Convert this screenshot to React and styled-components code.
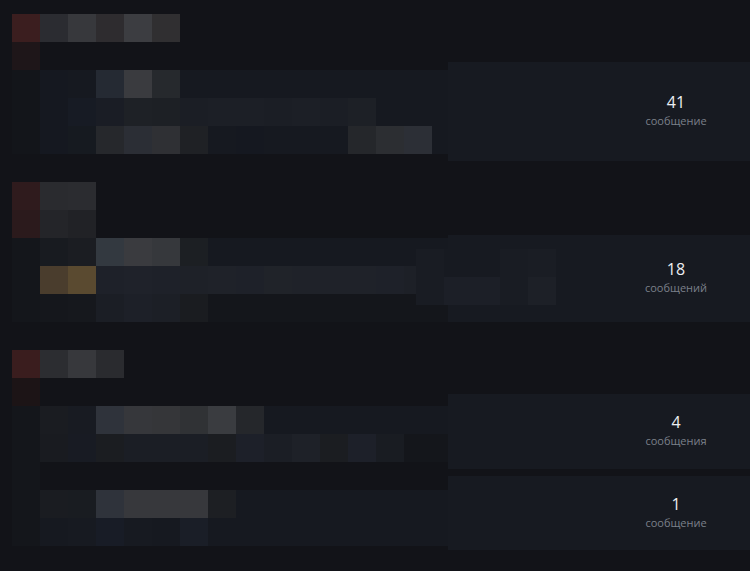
import React from "react";
import styled, { createGlobalStyle } from "styled-components";

const BG = "#121318";
const ROW = "#161920";

// blurred (mosaic) preview of each category: rows of 28px tiles, the rest of a row takes its fill
const sections = [
  {
    rows: [
      { fill: BG, cells: ["#3b1e1f", "#2b2c31", "#37383c", "#2e2c2f", "#3c3d41", "#302f31"] },
      { fill: BG, cells: ["#1e1619"] },
      { fill: ROW, cells: ["#13151a", "#151820", "#161920", "#252a33", "#3a3b3f", "#26292d"] },
      {
        fill: ROW,
        cells: ["#13151a", "#151820", "#171b24", "#1a1d25", "#1e2126", "#1d2025", "#1b1e25",
          "#1c1f26", "#1c1f26", "#1b1e25", "#1c1f26", "#1b1e25", "#1d2026"],
      },
      {
        fill: ROW,
        cells: ["#13151a", "#151820", "#161a20", "#26282c", "#2b2e35", "#2f3034", "#1f2125",
          "#161920", "#151820", "#161920", "#161920", "#161920", "#25272b", "#2c2e32", "#2c2f36"],
      },
    ],
    stats: [{ offset: 48, height: 99, count: "41", label: "сообщение" }],
  },
  {
    rows: [
      { fill: BG, cells: ["#2f1b1d", "#2a2b2f", "#2b2c30"] },
      { fill: BG, cells: ["#2b1a1c", "#242529", "#212226"] },
      { fill: ROW, cells: ["#14161b", "#181b20", "#1b1d22", "#333940", "#3a3b3f", "#36383c", "#1c1f23"] },
      {
        fill: "#1a1d24",
        cells: ["#14161b", "#4a3d2d", "#5a4a30", "#1e2129", "#1f222a", "#1e2129", "#1e2128",
          "#1f2229", "#1e2129", "#202329", "#1f2229", "#1f2229", "#1f2229", "#1e2129", "#1d2027"],
      },
      { fill: "#14161b", cells: ["#14161b", "#15171c", "#16181d", "#1b1e25", "#1d2028", "#1c1f26", "#1a1c20"] },
    ],
    preview: [
      ["#191c23", "#171a21", "#171a21", "#191c23", "#1a1d24"],
      ["#191c23", "#1c1f27", "#1c1f27", "#191c23", "#1d2027"],
    ],
    stats: [{ offset: 53, height: 87, count: "18", label: "сообщений" }],
  },
  {
    rows: [
      { fill: BG, cells: ["#3a1d1e", "#2c2d31", "#37383c", "#2a2b2f"] },
      { fill: BG, cells: ["#1c1416"] },
      {
        fill: ROW,
        cells: ["#14161b", "#1a1c21", "#181b22", "#2f333b", "#36373b", "#353639", "#303235", "#3a3c40", "#25272b"],
      },
      {
        fill: "#14161b",
        cells: ["#14161b", "#191b20", "#181b23", "#1b1d21", "#1b1e25", "#1b1e25", "#1b1e25", "#1b1d21",
          "#1d2029", "#1b1e25", "#1e2128", "#1b1d21", "#1d2029", "#191c22"],
      },
      { fill: BG, cells: ["#14161b"] },
      { fill: ROW, cells: ["#14161b", "#1a1c21", "#191c21", "#2f333b", "#37383c", "#37383c", "#37383c", "#1d1f23"] },
      { fill: ROW, cells: ["#14161b", "#161920", "#171a21", "#181c26", "#171a21", "#161920", "#1a1e27"] },
    ],
    stats: [
      { offset: 44, height: 75, count: "4", label: "сообщения" },
      { offset: 0, height: 74, count: "1", label: "сообщение" },
    ],
  },
];

const GlobalStyle = createGlobalStyle`
  html, body {
    margin: 0;
    background: ${BG};
    font-family: "Open Sans", "Liberation Sans", sans-serif;
  }
`;

const Page = styled.div`
  width: 750px;
  height: 571px;
  overflow: hidden;
  box-sizing: border-box;
  padding: 14px 0 0 12px;
  background: ${BG};
`;

const Section = styled.section`
  position: relative;
  display: grid;
  grid-template-columns: 436px 302px;
  height: ${(p) => p.$rows * 28}px;
  margin-bottom: 28px;
`;

const Mosaic = styled.div`
  display: flex;
  flex-direction: column;
`;

const TileRow = styled.div`
  display: flex;
  height: 28px;
  background: ${(p) => p.$fill};
`;

const Tile = styled.div`
  width: 28px;
  height: 28px;
  flex-shrink: 0;
  background: ${(p) => p.$c};
`;

const Preview = styled.div`
  position: absolute;
  left: 404px;
  top: 67px;
  display: grid;
  grid-template-columns: repeat(5, 28px);
  grid-auto-rows: 27.5px;
`;

const StatColumn = styled.div`
  display: flex;
  flex-direction: column;
  gap: 7px;
`;

const StatPanel = styled.div`
  flex-shrink: 0;
  height: ${(p) => p.$h}px;
  margin-top: ${(p) => p.$offset}px;
  background: #171a21;
  display: flex;
  align-items: center;
  justify-content: flex-end;
  padding-right: 14px;
`;

const Stat = styled.div`
  width: 120px;
  padding-bottom: 3px;
  display: flex;
  flex-direction: column;
  align-items: center;
`;

const Count = styled.div`
  font-size: 16px;
  font-weight: 500;
  line-height: 22px;
  color: #eceef2;
`;

const Label = styled.div`
  font-size: 11px;
  line-height: 16px;
  color: #7b808a;
`;

export default function App() {
  return (
    <Page>
      <GlobalStyle />
      {sections.map((s, i) => (
        <Section key={i} $rows={s.rows.length}>
          <Mosaic>
            {s.rows.map((r, j) => (
              <TileRow key={j} $fill={r.fill}>
                {r.cells.map((c, k) => (
                  <Tile key={k} $c={c} />
                ))}
              </TileRow>
            ))}
          </Mosaic>
          <StatColumn>
            {s.stats.map((st, j) => (
              <StatPanel key={j} $h={st.height} $offset={st.offset}>
                <Stat>
                  <Count>{st.count}</Count>
                  <Label>{st.label}</Label>
                </Stat>
              </StatPanel>
            ))}
          </StatColumn>
          {s.preview && (
            <Preview>
              {s.preview.flat().map((c, k) => (
                <Tile key={k} $c={c} />
              ))}
            </Preview>
          )}
        </Section>
      ))}
    </Page>
  );
}
